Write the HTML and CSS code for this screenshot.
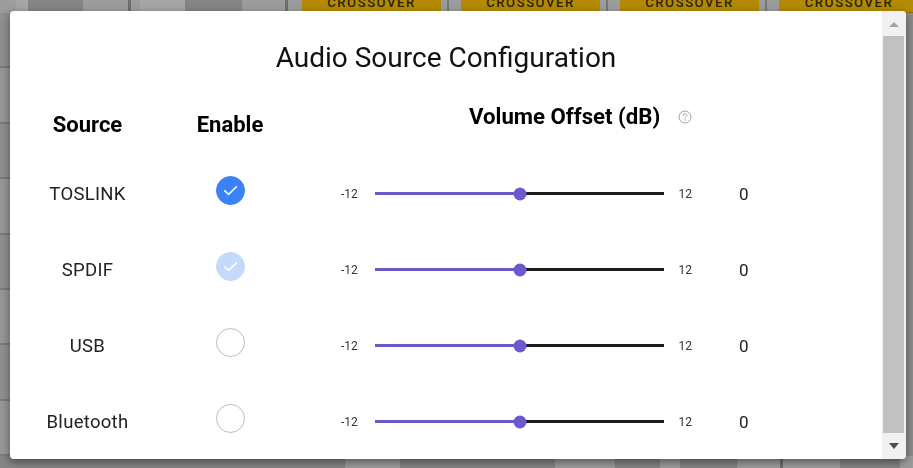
FILE: index.html
```html
<!DOCTYPE html>
<html lang="en">
<head>
<meta charset="utf-8">
<title>Audio Source Configuration</title>
<link rel="stylesheet" href="styles.css">
</head>
<body>
<div class="backdrop">
  <div class="topbar">
    <div class="seg s-light" style="width:16px"></div>
    <div class="seg s-lighter" style="width:12px"></div>
    <div class="seg s-dark s-green" style="width:55px"></div>
    <div class="seg s-light" style="width:45px"></div>
    <div class="seg s-line" style="width:3px"></div>
    <div class="seg s-light" style="width:9px"></div>
    <div class="seg s-lighter" style="width:45px"></div>
    <div class="seg s-dark s-green" style="width:57px"></div>
    <div class="seg s-light" style="width:43px"></div>
    <div class="seg s-line" style="width:3px"></div>
    <div class="seg s-light" style="width:14px"></div>
    <div class="gold">CROSSOVER</div>
    <div class="seg s-light gap"></div>
    <div class="gold">CROSSOVER</div>
    <div class="seg s-light gap"></div>
    <div class="gold">CROSSOVER</div>
    <div class="seg s-light gap"></div>
    <div class="gold">CROSSOVER</div>
  </div>
  <div class="middle">
    <div class="leftcol">
      <div class="blk b1"></div>
      <div class="blk b2"></div>
      <div class="blk b1"></div>
      <div class="blk b2"></div>
      <div class="blk b1"></div>
      <div class="blk b2"></div>
      <div class="blk b1"></div>
      <div class="blk b2"></div>
    </div>
  </div>
  <div class="bottombar">
    <div class="seg s-dark" style="width:345px"></div>
    <div class="seg s-light" style="width:55px"></div>
    <div class="seg s-dark" style="width:155px"></div>
    <div class="seg s-light" style="width:60px"></div>
    <div class="seg s-dark" style="width:45px"></div>
    <div class="seg s-light" style="width:20px"></div>
    <div class="seg s-dark" style="width:57px"></div>
    <div class="seg s-light" style="width:43px"></div>
    <div class="seg s-line" style="width:3px"></div>
    <div class="seg s-light" style="width:12px"></div>
    <div class="seg s-light" style="width:45px"></div>
    <div class="seg s-dark" style="width:60px"></div>
    <div class="seg s-light" style="width:13px"></div>
  </div>
</div>

<div class="modal">
  <div class="modal-body">
    <h1 class="title">Audio Source Configuration</h1>
    <div class="grid">
      <div class="hcell hsource">Source</div>
      <div class="hcell henable">Enable</div>
      <div class="hcell hvolume">
        <span>Volume Offset (dB)</span>
        <svg class="help" width="14" height="14" viewBox="0 0 14 14">
          <circle cx="7" cy="7" r="6" fill="none" stroke="#a0a0a0" stroke-width="1"/>
          <path d="M5.2 5.6 C5.2 4.5 6 3.9 7 3.9 C8 3.9 8.8 4.5 8.8 5.4 C8.8 6.5 7.1 6.6 7.1 7.9" fill="none" stroke="#a0a0a0" stroke-width="1" stroke-linecap="round"/>
          <circle cx="7.1" cy="9.9" r="0.7" fill="#a0a0a0"/>
        </svg>
      </div>

      <div class="label">TOSLINK</div>
      <div class="check-cell"><span class="check on">
        <svg width="29" height="29" viewBox="0 0 29 29"><path d="M8.8 14.8 L12.6 18.4 L20.4 10.8" fill="none" stroke="#fff" stroke-width="1.6" stroke-linecap="round" stroke-linejoin="round"/></svg>
      </span></div>
      <div class="slider-cell">
        <span class="min">-12</span>
        <span class="track"><span class="fill" style="width:50%"></span><span class="thumb" style="left:50%"></span></span>
        <span class="max">12</span>
      </div>
      <div class="value">0</div>

      <div class="label">SPDIF</div>
      <div class="check-cell"><span class="check on dim">
        <svg width="29" height="29" viewBox="0 0 29 29"><path d="M8.8 14.8 L12.6 18.4 L20.4 10.8" fill="none" stroke="#fff" stroke-width="1.6" stroke-linecap="round" stroke-linejoin="round"/></svg>
      </span></div>
      <div class="slider-cell">
        <span class="min">-12</span>
        <span class="track"><span class="fill" style="width:50%"></span><span class="thumb" style="left:50%"></span></span>
        <span class="max">12</span>
      </div>
      <div class="value">0</div>

      <div class="label">USB</div>
      <div class="check-cell"><span class="check"></span></div>
      <div class="slider-cell">
        <span class="min">-12</span>
        <span class="track"><span class="fill" style="width:50%"></span><span class="thumb" style="left:50%"></span></span>
        <span class="max">12</span>
      </div>
      <div class="value">0</div>

      <div class="label">Bluetooth</div>
      <div class="check-cell"><span class="check"></span></div>
      <div class="slider-cell">
        <span class="min">-12</span>
        <span class="track"><span class="fill" style="width:50%"></span><span class="thumb" style="left:50%"></span></span>
        <span class="max">12</span>
      </div>
      <div class="value">0</div>
    </div>
  </div>
  <div class="scrollbar">
    <div class="sb-btn sb-up"><span class="arrow-up"></span></div>
    <div class="sb-thumb"></div>
    <div class="sb-btn sb-down"><span class="arrow-down"></span></div>
  </div>
</div>
</body>
</html>
```

FILE: styles.css
```css
* { box-sizing: border-box; }
html, body { margin: 0; padding: 0; }
body {
  width: 913px;
  height: 468px;
  overflow: hidden;
  background: #8c8c8c;
  font-family: Roboto, "Liberation Sans", sans-serif;
}

/* ---------- dimmed background UI ---------- */
.backdrop {
  height: 468px;
  display: flex;
  flex-direction: column;
}
.topbar {
  display: flex;
  height: 13px;
  flex: none;
}
.seg { height: 100%; flex: none; }
.s-light { background: #9c9c9c; }
.s-lighter { background: #a5a5a5; }
.s-dark { background: #858585; }
.s-line { background: #6e6e6e; }
.s-green { box-shadow: inset 0 -2px 0 #2f6b38; }
.gap { width: 20px; box-shadow: inset 6px 0 0 #9c9c9c, inset 8px 0 0 #767676; }
.gold {
  flex: none;
  width: 139px;
  height: 13px;
  background: #b38a02;
  border-bottom: 1px solid #8e6e00;
  color: #2b2200;
  font-size: 13px;
  font-weight: 500;
  letter-spacing: 1.6px;
  text-align: center;
  line-height: 6px;
  overflow: hidden;
}
.gold:last-child { width: 140px; }
.middle {
  flex: 1;
  display: flex;
}
.leftcol {
  width: 10px;
  display: flex;
  flex-direction: column;
}
.blk { flex: 1; border-bottom: 2px solid #7a7a7a; }
.b1 { background: #8f8f8f; }
.b2 { background: #979797; }
.bottombar {
  display: flex;
  height: 12px;
  flex: none;
  background: #7a7a7a;
}

/* ---------- modal ---------- */
.modal {
  position: fixed;
  left: 10px;
  top: 11px;
  width: 896px;
  height: 448px;
  background: #fff;
  border-radius: 4px;
  box-shadow: 0 3px 8px rgba(0, 0, 0, 0.45);
  display: flex;
  overflow: hidden;
}
.modal-body {
  flex: 1;
  padding: 30px 0 0 10px;
  overflow: hidden;
}
.title {
  margin: 0 0 26px -10px;
  font-size: 28px;
  line-height: 33px;
  font-weight: 400;
  color: #111;
  text-align: center;
}
.grid {
  display: grid;
  grid-template-columns: 135px 150px 423px 1fr;
  grid-template-rows: 56px repeat(4, 76px);
}
.hcell {
  font-size: 22px;
  line-height: 26px;
  font-weight: 700;
  color: #000;
  text-align: center;
}
.hsource, .henable { padding-top: 12px; }
.hvolume {
  grid-column: 3 / span 2;
  padding: 3px 0 0 164px;
  text-align: left;
  display: flex;
  align-items: center;
  height: 29px;
  font-size: 22.2px;
}
.help { margin-left: 18px; margin-top: 2px; flex: none; }

.label {
  display: flex;
  align-items: center;
  justify-content: center;
  font-size: 18.5px;
  color: #222;
  letter-spacing: 0.3px;
}
.check-cell {
  display: flex;
  align-items: center;
  justify-content: center;
}
.check {
  width: 29px;
  height: 29px;
  border-radius: 50%;
  border: 1px solid #bcbcbc;
  background: #fff;
  margin-bottom: 8px;
  position: relative;
}
.check svg { position: absolute; left: -1px; top: -1px; }
.check.on { background: #3b82f6; border-color: #3b82f6; }
.check.on.dim { background: #c4d9fc; border-color: #c4d9fc; }

.slider-cell {
  display: flex;
  align-items: center;
  justify-content: center;
}
.min, .max {
  font-size: 12px;
  color: #333;
  flex: none;
}
.min { width: 34px; text-align: left; }
.max { width: 28px; text-align: right; }
.track {
  position: relative;
  width: 289px;
  height: 3px;
  background: #1c1c1c;
  flex: none;
  margin-top: -1px;
}
.fill {
  position: absolute;
  left: 0;
  top: 0;
  height: 100%;
  background: #6a5acd;
}
.thumb {
  position: absolute;
  top: 50%;
  width: 13px;
  height: 13px;
  border-radius: 50%;
  background: #6a5acd;
  transform: translate(-50%, -50%);
}
.value {
  display: flex;
  align-items: center;
  padding-left: 11px;
  font-size: 17px;
  color: #222;
}

/* ---------- scrollbar ---------- */
.scrollbar {
  width: 24px;
  flex: none;
  background: #f1f1f1;
  display: flex;
  flex-direction: column;
}
.sb-btn {
  flex: none;
  display: flex;
  align-items: center;
  justify-content: center;
}
.sb-up { height: 25px; padding-top: 1px; }
.sb-down { height: 26px; }
.sb-thumb {
  flex: 1;
  background: #c1c1c1;
  margin: 0 2px 0 1px;
}
.arrow-up {
  width: 0; height: 0;
  border-left: 5.5px solid transparent;
  border-right: 5.5px solid transparent;
  border-bottom: 5px solid #a3a3a3;
}
.arrow-down {
  width: 0; height: 0;
  border-left: 5.5px solid transparent;
  border-right: 5.5px solid transparent;
  border-top: 6px solid #505050;
}
```
